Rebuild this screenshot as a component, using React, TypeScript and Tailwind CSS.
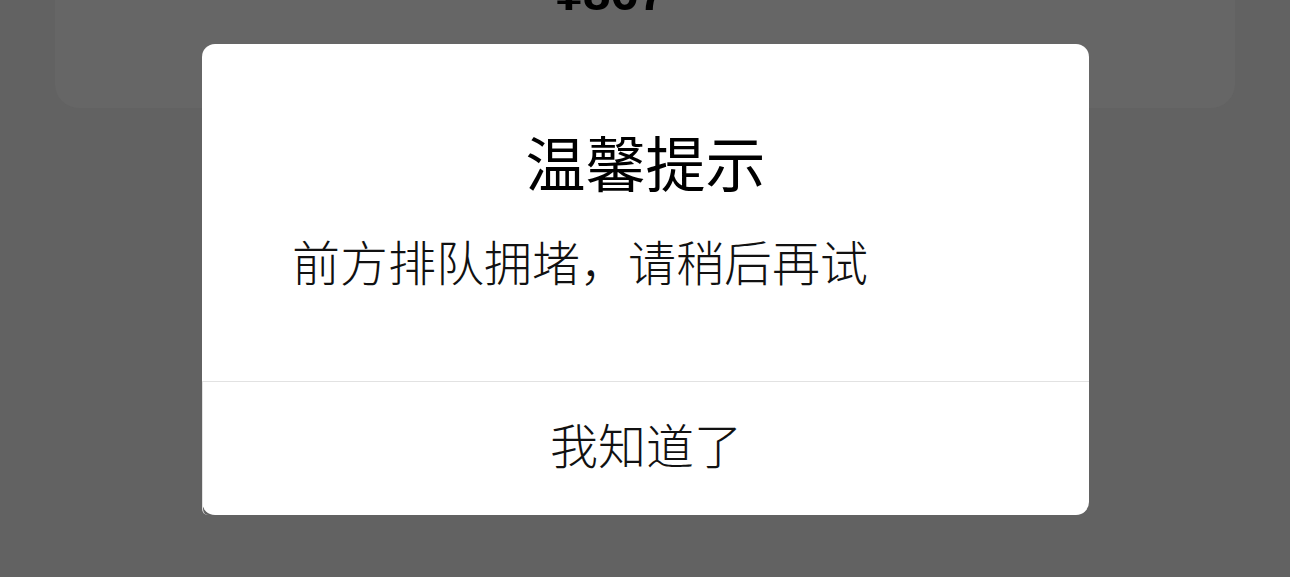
import React from "react";

export default function App() {
  return (
    <div
      className="relative w-full h-[577px] overflow-hidden bg-[#626262]"
      style={{ fontFamily: '"Noto Sans CJK SC", "Noto Sans", sans-serif' }}
    >
      {/* background card under the overlay */}
      <div className="mx-[55px] -mt-[60px] h-[168px] rounded-[24px] bg-[#666666] pt-[28px] pl-[500px]">
        <div
          className="text-[50px] leading-[50px] font-bold text-black"
          style={{ fontFamily: '"Liberation Sans", Arial, sans-serif' }}
        >
          ¥867
        </div>
      </div>

      {/* dialog */}
      <div className="absolute left-[202px] top-[44px] w-[887px] h-[471px] rounded-[13px] bg-white flex flex-col">
        <div className="pt-[87px] text-center text-[60px] leading-[60px] font-normal text-black">
          温馨提示
        </div>
        <div className="mt-[45px] pl-[90px] text-[48px] leading-[48px] font-light text-[#111]">
          前方排队拥堵，请稍后再试
        </div>
        <div className="flex-1" />
        <button className="h-[134px] w-full pb-[12px] border-t border-l border-[#e2e2e2] rounded-bl-[6px] rounded-br-[13px] flex items-center justify-center text-[48px] leading-[48px] font-light text-[#111]">
          我知道了
        </button>
      </div>
    </div>
  );
}
